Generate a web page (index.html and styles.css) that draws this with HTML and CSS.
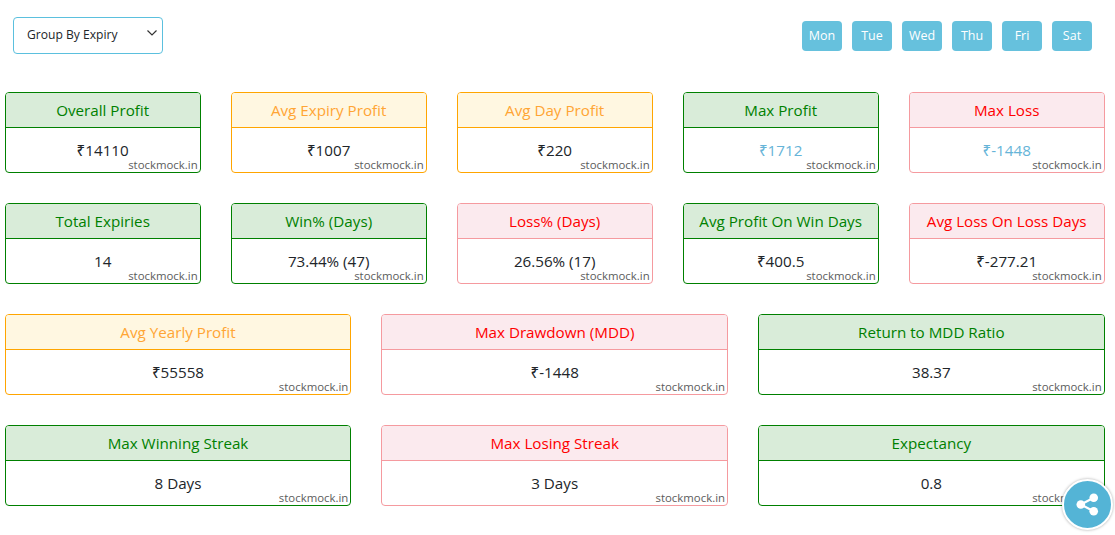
FILE: index.html
```html
<!DOCTYPE html>
<html lang="en">
<head>
<meta charset="utf-8">
<title>Stats</title>
<link rel="stylesheet" href="styles.css">
</head>
<body>
<div class="toolbar">
  <div class="select-box"><span>Group By Expiry</span>
    <svg class="chev" width="10" height="6" viewBox="0 0 10 6"><path d="M.5.5 5 5 9.500.5" fill="none" stroke="#333" stroke-width="1.200"/></svg>
  </div>
  <div class="days">
    <button class="day">Mon</button><button class="day">Tue</button><button class="day">Wed</button><button class="day">Thu</button><button class="day">Fri</button><button class="day">Sat</button>
  </div>
</div>
<div class="grid five">
  <div class="card green"><div class="head">Overall Profit</div><div class="body">₹14110<span class="mark">stockmock.in</span></div></div>
  <div class="card amber"><div class="head">Avg Expiry Profit</div><div class="body">₹1007<span class="mark">stockmock.in</span></div></div>
  <div class="card amber"><div class="head">Avg Day Profit</div><div class="body">₹220<span class="mark">stockmock.in</span></div></div>
  <div class="card green"><div class="head">Max Profit</div><div class="body link">₹1712<span class="mark">stockmock.in</span></div></div>
  <div class="card red"><div class="head">Max Loss</div><div class="body link">₹-1448<span class="mark">stockmock.in</span></div></div>
  <div class="card green"><div class="head">Total Expiries</div><div class="body">14<span class="mark">stockmock.in</span></div></div>
  <div class="card green"><div class="head">Win% (Days)</div><div class="body">73.44% (47)<span class="mark">stockmock.in</span></div></div>
  <div class="card red"><div class="head">Loss% (Days)</div><div class="body">26.56% (17)<span class="mark">stockmock.in</span></div></div>
  <div class="card green"><div class="head">Avg Profit On Win Days</div><div class="body">₹400.5<span class="mark">stockmock.in</span></div></div>
  <div class="card red"><div class="head">Avg Loss On Loss Days</div><div class="body">₹-277.21<span class="mark">stockmock.in</span></div></div>
</div>
<div class="grid three">
  <div class="card amber"><div class="head">Avg Yearly Profit</div><div class="body">₹55558<span class="mark">stockmock.in</span></div></div>
  <div class="card red"><div class="head">Max Drawdown (MDD)</div><div class="body">₹-1448<span class="mark">stockmock.in</span></div></div>
  <div class="card green"><div class="head">Return to MDD Ratio</div><div class="body">38.37<span class="mark">stockmock.in</span></div></div>
  <div class="card green"><div class="head">Max Winning Streak</div><div class="body">8 Days<span class="mark">stockmock.in</span></div></div>
  <div class="card red"><div class="head">Max Losing Streak</div><div class="body">3 Days<span class="mark">stockmock.in</span></div></div>
  <div class="card green"><div class="head">Expectancy</div><div class="body">0.8<span class="mark">stockmock.in</span></div></div>
</div>
<div class="share">
  <svg width="23" height="23" viewBox="0 0 24 24" fill="#fff"><circle cx="18.500" cy="5" r="4.500"/><circle cx="5" cy="12" r="4.500"/><circle cx="18.500" cy="19" r="4.500"/><path d="M5 12 18.500 5M5 12l13.500 7" stroke="#fff" stroke-width="2.200"/></svg>
</div>
</body>
</html>
```
FILE: styles.css
```css
* { box-sizing: border-box; }
html, body { height: 100%; }
body {
  margin: 0;
  overflow: hidden;
  background: #fff;
  color: #212529;
  font-family: "Open Sans", "Noto Sans", sans-serif;
  font-size: 15px;
}
.toolbar {
  display: flex;
  justify-content: space-between;
  align-items: center;
  height: 37px;
  margin: 17px 23px 38px 13px;
}
.select-box {
  display: flex;
  align-items: center;
  justify-content: space-between;
  width: 150px;
  height: 37px;
  padding: 0 5px 2px 13px;
  border: 1px solid #5bc0de;
  border-radius: 4px;
  font-size: 12.1px;
  color: #212529;
}
.chev { margin-top: -3px; }
.days { display: flex; gap: 10px; }
.day {
  width: 40px;
  height: 30px;
  padding: 0;
  border: 0;
  border-radius: 4px;
  background: #66c1dd;
  color: #fff;
  font-family: inherit;
  font-size: 12.5px;
}
.grid {
  display: grid;
  gap: 30px;
  margin: 0 10.33px 30px 4.67px;
}
.five { grid-template-columns: repeat(5, 1fr); }
.three { grid-template-columns: repeat(3, 1fr); }
.card {
  display: flex;
  flex-direction: column;
  height: 81px;
  border: 1px solid;
  border-radius: 4px;
  overflow: hidden;
}
.head {
  height: 35px;
  line-height: 35px;
  border-bottom: 1px solid;
  text-align: center;
  font-size: 15.2px;
  white-space: nowrap;
}
.body {
  position: relative;
  flex: 1;
  padding-top: 11px;
  text-align: center;
  font-size: 15.2px;
  line-height: 22px;
}
.mark {
  position: absolute;
  right: 2px;
  bottom: 0;
  font-size: 11.4px;
  line-height: 15px;
  color: #5c5c5c;
}
.link { color: #66b4d8; }
.green { border-color: #008000; }
.green .head { background: #d9ecd9; color: #008000; border-color: #008000; }
.amber { border-color: #ffa500; }
.amber .head { background: #fff7e1; color: #ffa534; border-color: #ffa500; }
.red { border-color: #f59a9f; }
.red .head { background: #fbeaee; color: #ff0000; border-color: #f59a9f; }
.share {
  position: fixed;
  left: 1062px;
  top: 479px;
  width: 51px;
  height: 51px;
  display: flex;
  align-items: center;
  justify-content: center;
  border: 2px solid #fff;
  border-radius: 50%;
  background: #54b4d6;
  box-shadow: 0 0 3px rgba(0,0,0,.35);
}
```
